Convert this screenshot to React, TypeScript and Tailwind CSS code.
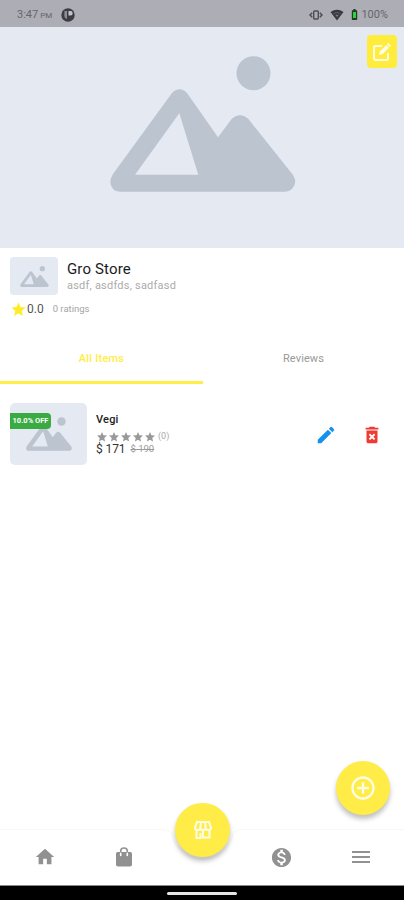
import React from "react";
import {
  MdAddCircleOutline,
  MdBatteryFull,
  MdDeleteForever,
  MdEdit,
  MdHome,
  MdMenu,
  MdMonetizationOn,
  MdStar,
} from "react-icons/md";

function Placeholder({ className }: { className: string }) {
  return (
    <svg viewBox="0 0 186 136" className={className} fill="#bcc4cf">
      <circle cx="143.5" cy="17.3" r="17" />
      <path
        fillRule="evenodd"
        d="M62 37 Q69.500 29.500 77 37 L108 81.300 L122 62.500 Q130 55.500 138 62.500 L183 119 Q188 127 182 133 Q179 135.700 175 135.700 H10 Q4 135.700 1.500 130.500 Q-1.500 125 3 118 Z M69.300 57.300 L25 118.700 H88.300 Z"
      />
    </svg>
  );
}

function BagIcon({ className }: { className: string }) {
  return (
    <svg viewBox="0 0 18 20" className={className}>
      <path
        d="M2.500 5H15.500Q17 5 17 6.500V17.500Q17 19.500 15 19.500H3Q1 19.500 1 17.500V6.500Q1 5 2.500 5Z"
        fill="currentColor"
      />
      <path d="M5.700 8V4.300a3.300 3.300 0 0 1 6.600 0V8" fill="none" stroke="currentColor" strokeWidth="1.600" />
      <path d="M5.700 6.300V8.500M12.300 6.300V8.500" stroke="#fff" strokeWidth="1.600" strokeLinecap="round" />
    </svg>
  );
}

function StatusBar() {
  return (
    <div className="absolute inset-x-0 top-0 flex h-[27px] items-center bg-[#adadb5] pl-[17px] pr-[16px] pt-[2px] text-[#66666b]">
      <span className="text-[11px] leading-none">
        3:47<span className="text-[8px]"> PM</span>
      </span>
      <svg viewBox="0 0 14 14" className="ml-[9px] h-[14px] w-[14px]">
        <circle cx="7" cy="7" r="6.700" fill="#3c3c42" />
        <path d="M3.500 3H6V11Q3.500 10.500 3.300 8Z" fill="#8d8d94" />
        <path d="M7.500 3H9.500a2.200 2.200 0 0 1 0 4.400H7.500Z" fill="#c4c4ca" />
      </svg>
      <div className="ml-auto flex items-center">
        <svg viewBox="0 0 14 12" className="h-[12px] w-[14px]" fill="none" stroke="#4c4c52">
          <rect x="4.700" y="2" width="4.600" height="8" rx="1" strokeWidth="1.400" />
          <path d="M3.200 3.800L1 6l2.200 2.200M10.800 3.800L13 6l-2.200 2.200" strokeWidth="1.500" />
        </svg>
        <svg viewBox="0 0 14 12" className="ml-[7px] h-[12px] w-[14px]">
          <path d="M.5 3Q7-1.500 13.500 3L7 11.500Z" fill="#38383d" />
          <path d="M3.500 4.500Q7 2.300 10.500 4.500" fill="none" stroke="#66666c" strokeWidth=".8" />
          <path d="M5.200 5.800h3.600L7 8Z" fill="#7b7b81" />
        </svg>
        <span className="relative ml-[4px] block h-[13px] w-[13px]">
          <MdBatteryFull className="h-[13px] w-[13px] text-[#26382a]" />
          <span className="absolute left-[5px] top-[4px] h-[6px] w-[3px] bg-[#2bd43c]" />
        </span>
        <span className="text-[11px] leading-none">100%</span>
      </div>
    </div>
  );
}

function Header() {
  return (
    <header className="relative flex h-[248px] shrink-0 items-center justify-center bg-[#e5e9f2] pl-[2px]">
      <Placeholder className="h-[136px] w-[186px]" />
      <StatusBar />
      <button className="absolute right-[7px] top-[35px] flex h-[33px] w-[30px] items-center justify-center rounded-[4px] bg-[#ffec3d]">
        <svg viewBox="0 0 20 20" className="h-[20px] w-[20px]" fill="none" stroke="#fffde8">
          <path
            d="M10 4H3.500Q2 4 2 5.500V16.500Q2 18 3.500 18H14.500Q16 18 16 16.500V11"
            strokeWidth="1.900"
          />
          <path d="M7 13l.8-3.600L14.300 3l2.700 2.700-6.500 6.500Z" fill="#fffde8" stroke="none" />
          <path d="M15 2.300L16.200 1.100 18.900 3.800 17.700 5Z" fill="#fffde8" stroke="none" />
        </svg>
      </button>
    </header>
  );
}

function StoreInfo() {
  return (
    <section className="h-[86px] shrink-0 px-[10px] pt-[9px]">
      <div className="flex">
        <div className="flex h-[38px] w-[48px] items-center justify-center rounded-[4px] bg-[#e5e9f2]">
          <Placeholder className="h-[21px] w-[29px]" />
        </div>
        <div className="ml-[9px] pt-[3px]">
          <h1 className="text-[15px] leading-[18px] tracking-[0.15px] text-[#1c1c1c]">Gro Store</h1>
          <p className="text-[11px] leading-[15px] tracking-[0.22px] text-[#ababab]">
            asdf, asdfds, sadfasd
          </p>
        </div>
      </div>
      <div className="mt-[6px] flex h-[16px] items-center">
        <MdStar className="h-[17px] w-[17px] text-[#ffec28]" />
        <span className="text-[12px] leading-none text-[#555]">0.0</span>
        <span className="ml-[9px] text-[9.500px] leading-none text-[#a5a5a5]">0 ratings</span>
      </div>
    </section>
  );
}

function Tabs() {
  return (
    <div className="flex h-[50px] shrink-0 text-center text-[11px] leading-[50px]">
      <div className="w-[203px] border-b-[3px] border-[#ffee48] font-medium text-[#ffed43]">
        <span className="tracking-[0.2px]">All Items</span>
      </div>
      <div className="flex-1 tracking-[0.1px] text-[#999]">Reviews</div>
    </div>
  );
}

function Item() {
  return (
    <div className="flex px-[10px] pt-[19px]">
      <div className="relative flex h-[62px] w-[77px] items-center justify-center rounded-[5px] bg-[#e5e9f2]">
        <Placeholder className="h-[34px] w-[46px]" />
        <span className="absolute left-0 top-[10px] flex h-[16px] w-[41px] items-center justify-center rounded-r-[4px] bg-[#3aaa42] text-[7.500px] font-bold text-white">
          10.0% OFF
        </span>
      </div>
      <div className="ml-[9px] pt-[9px]">
        <h2 className="text-[11px] font-medium leading-[15px] tracking-[0.2px] text-[#222]">Vegi</h2>
        <div className="mt-[3px] flex h-[13px] items-center text-[#999]">
          {[0, 1, 2, 3, 4].map((n) => (
            <MdStar key={n} className="h-[12px] w-[12px]" />
          ))}
          <span className="ml-[2px] text-[9px] text-[#aaa]">(0)</span>
        </div>
        <div className="flex items-center leading-[12px]">
          <span className="text-[12px] tracking-[-0.1px] text-[#333]">$ 171</span>
          <span className="ml-[5px] text-[9.500px] text-[#999] line-through">$ 190</span>
        </div>
      </div>
      <div className="ml-auto flex pr-[11px] pt-[21px]">
        <MdEdit className="h-[22px] w-[22px] text-[#1592ee]" />
        <MdDeleteForever className="ml-[24px] h-[22px] w-[22px] text-[#ef3b32]" />
      </div>
    </div>
  );
}

function BottomNav() {
  return (
    <nav className="relative flex h-[56px] shrink-0 items-center bg-white text-[#919191]">
      {/* bar outline with the notch for the docked button */}
      <svg viewBox="0 0 404 36" className="absolute left-0 top-0 h-[36px] w-[404px]" fill="none">
        <path
          d="M0 .5H160Q170 .5 172 5A31 31 0 0 0 233 5Q235 .5 245 .5H404"
          stroke="#f7f7f7"
        />
      </svg>
      <MdHome className="ml-[34px] h-[22px] w-[22px]" />
      <BagIcon className="ml-[59px] h-[20px] w-[18px]" />
      <MdMonetizationOn className="ml-[137px] h-[23px] w-[23px]" />
      <MdMenu className="ml-[56px] h-[24px] w-[24px]" />
      <button className="absolute left-[175px] top-[-26px] flex h-[54px] w-[55px] items-center justify-center rounded-full bg-[#ffec46] shadow-[0_4px_5px_rgba(0,0,0,0.25)]">
        <svg
          viewBox="0 0 20 20"
          className="h-[20px] w-[20px]"
          fill="none"
          stroke="#fffde8"
          strokeWidth="2"
        >
          <path d="M4 2H16L18 8Q18 10 15.300 10Q12.700 10 12.700 7.500Q12.700 10 10 10Q7.300 10 7.300 7.500Q7.300 10 4.700 10Q2 10 2 8ZM7.300 7.500L8 2M12.700 7.500L12 2" />
          <path d="M3.500 10V18H7.500V13M10 10V17.500H16.500V10" />
        </svg>
      </button>
    </nav>
  );
}

export default function App() {
  return (
    <main className="relative flex h-[900px] w-[404px] flex-col overflow-hidden bg-white font-['Roboto',sans-serif]">
      <Header />
      <StoreInfo />
      <Tabs />
      <div className="flex-1">
        <Item />
      </div>
      <button className="absolute right-[14px] top-[761px] flex h-[54px] w-[54px] items-center justify-center rounded-full bg-[#ffec46] shadow-[0_4px_5px_rgba(0,0,0,0.25)]">
        <MdAddCircleOutline className="h-[28px] w-[28px] text-[#fffde8]" />
      </button>
      <BottomNav />
      <div className="flex h-[15px] shrink-0 justify-center border-t border-[#888] bg-black pt-[6px]">
        <div className="h-[3px] w-[70px] rounded-full bg-[#e5e5e5]" />
      </div>
    </main>
  );
}
